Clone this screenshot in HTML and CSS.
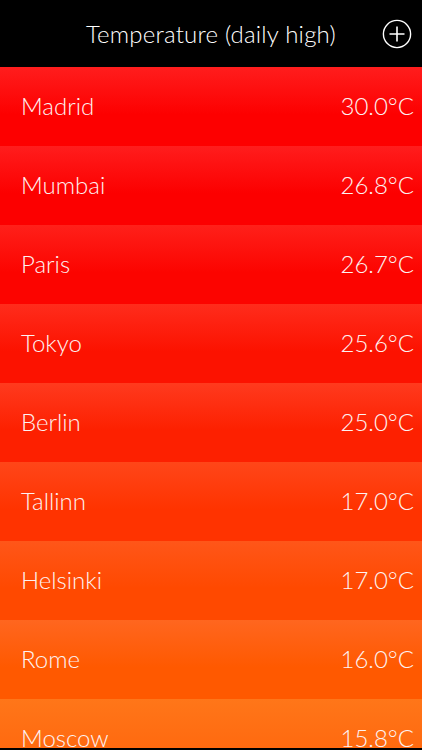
FILE: index.html
```html
<!DOCTYPE html>
<html>
<head>
<meta charset="utf-8">
<link rel="stylesheet" href="styles.css">
</head>
<body>
<div class="app">
  <header class="bar">
    <span class="title">Temperature (daily high)</span>
    <span class="add" aria-label="Add">
      <svg width="30" height="30" viewBox="0 0 30 30">
        <circle cx="15" cy="15" r="13.6" fill="none" stroke="#fff" stroke-width="1.4"/>
        <path d="M15 7.5V22.5M7.5 15H22.5" stroke="#fff" stroke-width="1.6" fill="none"/>
      </svg>
    </span>
  </header>
  <ul class="list">
    <li class="row r1"><span class="city">Madrid</span><span class="temp">30.0°C</span></li>
    <li class="row r2"><span class="city">Mumbai</span><span class="temp">26.8°C</span></li>
    <li class="row r3"><span class="city">Paris</span><span class="temp">26.7°C</span></li>
    <li class="row r4"><span class="city">Tokyo</span><span class="temp">25.6°C</span></li>
    <li class="row r5"><span class="city">Berlin</span><span class="temp">25.0°C</span></li>
    <li class="row r6"><span class="city">Tallinn</span><span class="temp">17.0°C</span></li>
    <li class="row r7"><span class="city">Helsinki</span><span class="temp">17.0°C</span></li>
    <li class="row r8"><span class="city">Rome</span><span class="temp">16.0°C</span></li>
    <li class="row r9"><span class="city">Moscow</span><span class="temp">15.8°C</span></li>
  </ul>
</div>
</body>
</html>
```
FILE: styles.css
```css
html, body {
  margin: 0;
  padding: 0;
  background: #000;
}
body {
  font-family: Lato, "Open Sans", sans-serif;
  color: #fff;
  height: 750px;
  overflow: hidden;
}
.app {
  width: 422px;
  height: 748px;
  overflow: hidden;
}
.bar {
  position: relative;
  height: 67px;
  background: #000;
  display: flex;
  align-items: center;
  justify-content: center;
}
.title {
  font-size: 24px;
  font-weight: 300;
  letter-spacing: 0.2px;
  margin-top: -1px;
}
.add {
  position: absolute;
  right: 10px;
  top: 19px;
  width: 30px;
  height: 30px;
}
.add svg { display: block; }
.list {
  list-style: none;
  margin: 0;
  padding: 0;
}
.row {
  height: 79px;
  box-sizing: border-box;
  display: flex;
  align-items: center;
  justify-content: space-between;
  padding: 0 8px 2px 21px;
  font-size: 24px;
  font-weight: 300;
  background: linear-gradient(to bottom, var(--top) 0%, var(--base) 60%, var(--base) 100%);
}
.city, .temp { color: #fdf2f2; }
.r1 { --top: #ff1d1d; --base: #fd0000; }
.r2 { --top: #ff1d1d; --base: #fc0000; }
.r3 { --top: #ff201a; --base: #fc0400; }
.r4 { --top: #ff2c1c; --base: #fc1200; }
.r5 { --top: #ff3a1e; --base: #fd2000; }
.r6 { --top: #ff4619; --base: #ff3300; }
.r7 { --top: #ff5619; --base: #ff4900; }
.r8 { --top: #ff661f; --base: #ff5900; }
.r9 { --top: #ff7619; --base: #ff6a10; }
```
